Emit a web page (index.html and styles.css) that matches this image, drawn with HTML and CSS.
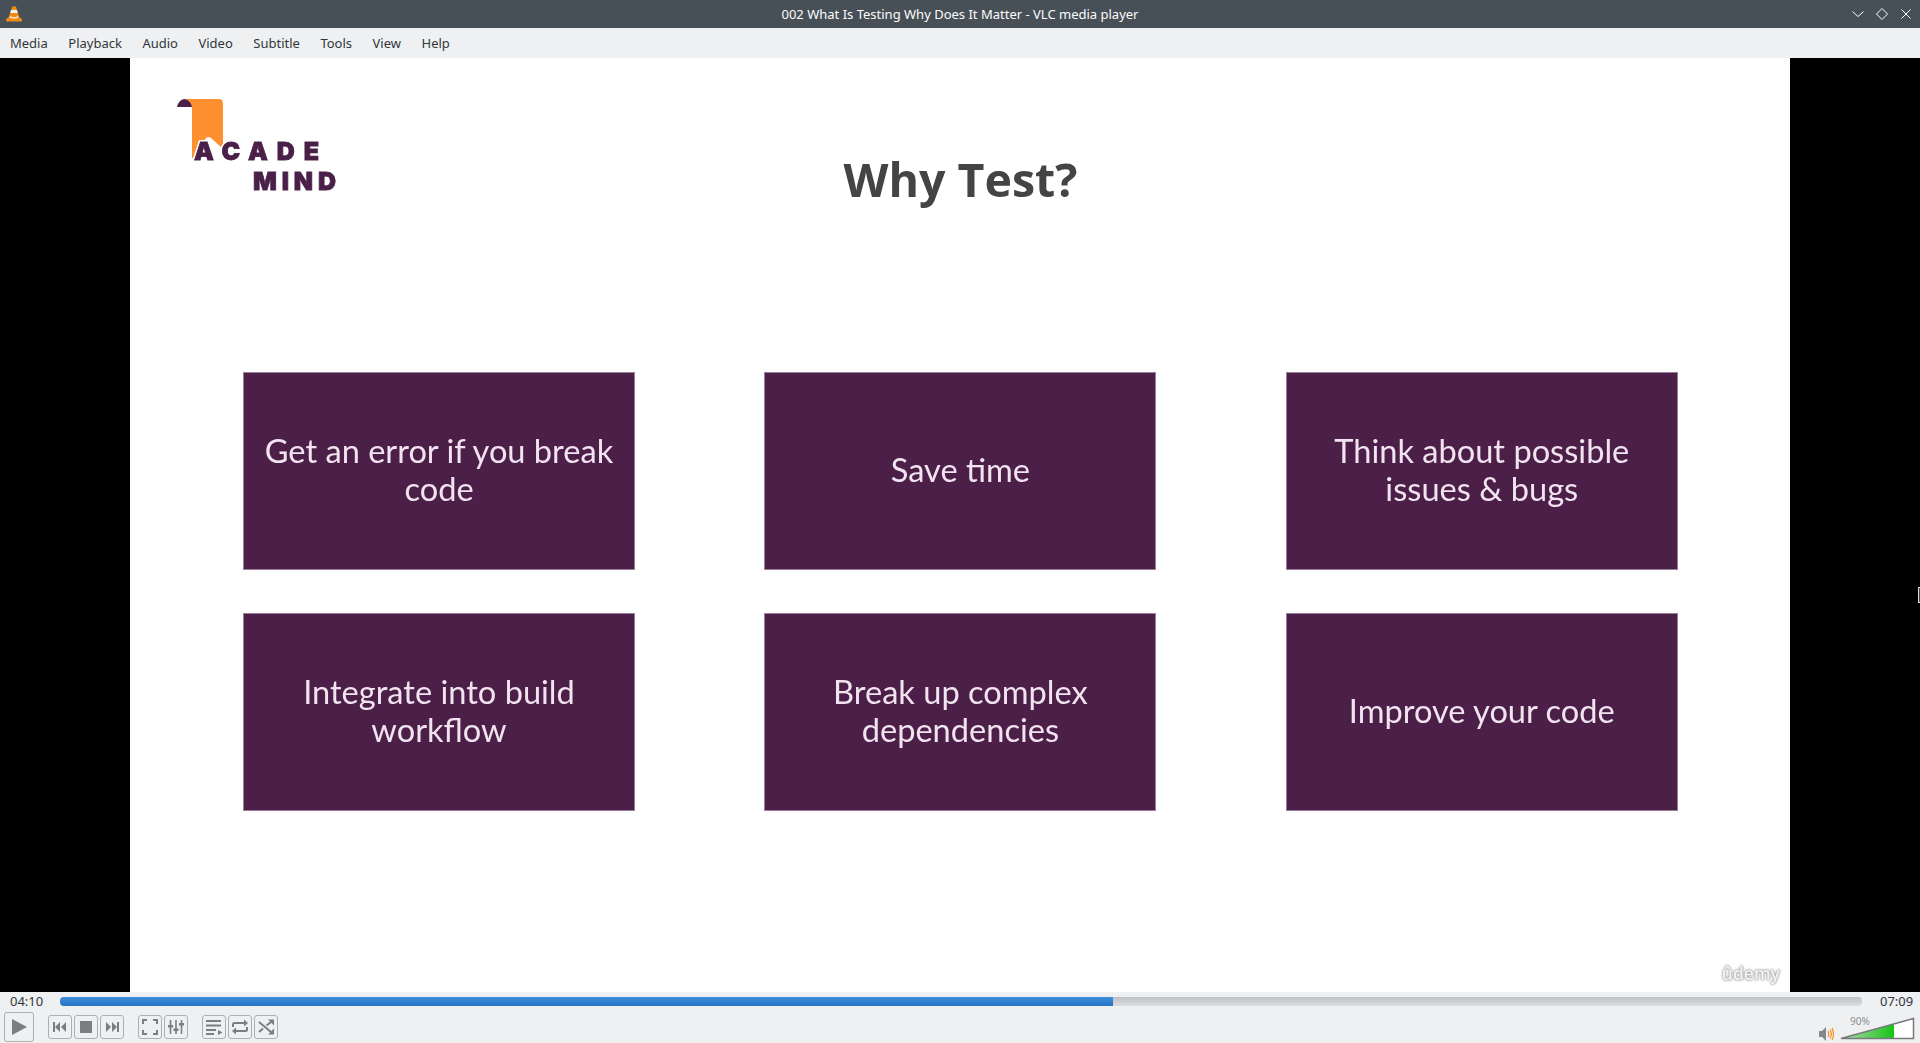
FILE: index.html
```html
<!DOCTYPE html>
<html lang="en">
<head>
<meta charset="utf-8">
<title>VLC media player</title>
<link rel="stylesheet" href="styles.css">
</head>
<body>
<div class="app">
  <header class="titlebar">
    <svg class="cone" width="18" height="18" viewBox="0 0 18 18">
      <path d="M7 1.500h4l1 3.500H6z" fill="#f28a12"/>
      <path d="M6 5h6l1 3H5z" fill="#f4f1ea"/>
      <path d="M5 8h8l1.400 4.500H3.600z" fill="#f28a12"/>
      <path d="M3.600 12h10.800l2.600 2.200v1.500q0 .8-1 .8H2q-1 0-1-.8v-1.500z" fill="#ee8a16"/>
      <path d="M5 11q4 2.400 8 0l.5 1.600q-4.500 2-9 0z" fill="#f7f2e8"/>
    </svg>
    <div class="wintitle">002 What Is Testing Why Does It Matter - VLC media player</div>
    <div class="winbtns">
      <svg width="14" height="14" viewBox="0 0 14 14"><path d="M1.500 4.500 7 9.500l5.500-5" fill="none" stroke="#fff" stroke-width="1"/></svg>
      <svg width="14" height="14" viewBox="0 0 14 14"><path d="M7 1.500 12.500 7 7 12.500 1.500 7z" fill="none" stroke="#fff" stroke-width="1"/></svg>
      <svg width="14" height="14" viewBox="0 0 14 14"><path d="M2.500 2.500l9 9M11.500 2.500l-9 9" fill="none" stroke="#fff" stroke-width="1"/></svg>
    </div>
  </header>

  <nav class="menubar">
    <span>Media</span><span>Playback</span><span>Audio</span><span>Video</span><span>Subtitle</span><span>Tools</span><span>View</span><span>Help</span>
  </nav>

  <main class="video">
    <section class="slide">
      <div class="slide-head">
        <svg class="logo" width="170" height="100" viewBox="0 0 170 100">
          <path d="M0 9Q2 1 8 1Q14 1 16 9Z" fill="#4a1f48"/>
          <path d="M8 1H42q4 0 4 5V51L34 40q-3-2-5 0L18 60H15V9Q14 3 8 1z" fill="#ff9030"/>
          <text x="17" y="62" class="logo-halo" textLength="125" lengthAdjust="spacing">ACADE</text>
          <text x="17" y="62" class="logo-text" textLength="125" lengthAdjust="spacing">ACADE</text>
          <text x="76" y="92" class="logo-text" textLength="83" lengthAdjust="spacing">MIND</text>
        </svg>
        <h1 class="heading">Why Test?</h1>
      </div>
      <div class="cards">
        <div class="card">Get an error if you break code</div>
        <div class="card">Save time</div>
        <div class="card">Think about possible issues &amp; bugs</div>
        <div class="card">Integrate into build workflow</div>
        <div class="card">Break up complex dependencies</div>
        <div class="card">Improve your code</div>
      </div>
      <div class="watermark">ûdemy</div>
    </section>
    <div class="cursor"></div>
  </main>

  <section class="seekrow">
    <span class="time">04:10</span>
    <div class="seek"><div class="seek-fill"></div></div>
    <span class="time">07:09</span>
  </section>

  <footer class="controls">
    <button class="btn play"><svg width="20" height="20" viewBox="0 0 20 20"><path d="M3 2l15 8-15 8z" fill="#7b7d80"/></svg></button>
    <div class="group first">
      <button class="btn"><svg width="16" height="16" viewBox="0 0 16 16"><path d="M1 3h2v10H1zM8 3v10L3 8zM14 3v10L9 8z" fill="#7b7d80"/></svg></button>
      <button class="btn"><svg width="16" height="16" viewBox="0 0 16 16"><path d="M2 2h12v12H2z" fill="#7b7d80"/></svg></button>
      <button class="btn"><svg width="16" height="16" viewBox="0 0 16 16"><path d="M15 3h-2v10h2zM8 3v10l5-5zM2 3v10l5-5z" fill="#7b7d80"/></svg></button>
    </div>
    <div class="group">
      <button class="btn"><svg width="18" height="18" viewBox="0 0 18 18"><path d="M2 6V2h4M12 2h4v4M16 12v4h-4M6 16H2v-4" fill="none" stroke="#7b7d80" stroke-width="2"/></svg></button>
      <button class="btn"><svg width="18" height="18" viewBox="0 0 18 18"><path d="M3.500 2v14M9 2v14M14.500 2v14" stroke="#7b7d80" stroke-width="1.600"/><path d="M1 7h5v2.500H1zM6.500 10.500h5V13h-5zM12 5h5v2.500h-5z" fill="#7b7d80"/></svg></button>
    </div>
    <div class="group">
      <button class="btn"><svg width="18" height="18" viewBox="0 0 18 18"><path d="M1 3h15M1 7.500h15M1 12h10M1 16h8" stroke="#7b7d80" stroke-width="1.800"/><path d="M13 12l4.500 2.500L13 17z" fill="#7b7d80"/></svg></button>
      <button class="btn"><svg width="18" height="18" viewBox="0 0 18 18"><path d="M2 9V6.500Q2 5 3.500 5H14M16 9v2.500q0 1.500-1.500 1.500H4" fill="none" stroke="#7b7d80" stroke-width="2"/><path d="M13 1.500l4 3.500-4 3.500zM5 9.500 1 13l4 3.500z" fill="#7b7d80"/></svg></button>
      <button class="btn"><svg width="18" height="18" viewBox="0 0 18 18"><path d="M2 4l12 10M2 14l4-3.500M9.500 7.500 14 4" fill="none" stroke="#7b7d80" stroke-width="2"/><path d="M11 1.500h6v6zM11 16.500h6v-6z" fill="#7b7d80"/></svg></button>
    </div>
    <div class="volume">
      <svg class="speaker" width="16" height="16" viewBox="0 0 16 16">
        <path d="M1 5h3l4-4v14l-4-4H1z" fill="#85878a"/>
        <path d="M10 5q1.500 3 0 6M12 3.500q2.500 4.500 0 9M14 2q3 6 0 12" fill="none" stroke="#f28c1e" stroke-width="1.200"/>
      </svg>
      <div class="vol-slider">
        <span class="vol-label">90%</span>
        <svg width="75" height="23" viewBox="0 0 75 23">
          <defs>
            <linearGradient id="vol" x1="0" x2="1" y1="0" y2="0">
              <stop offset="0" stop-color="#b7dcb5"/>
              <stop offset="1" stop-color="#15c415"/>
            </linearGradient>
          </defs>
          <path d="M1 21.500 73.500 1.500v20z" fill="#fff"/>
          <path d="M1 21.500 54 6.900v14.600z" fill="url(#vol)"/>
          <path d="M1 21.500 73.500 1.500v20z" fill="none" stroke="#77797c" stroke-width="1.500"/>
        </svg>
      </div>
    </div>
  </footer>
</div>
</body>
</html>
```
FILE: styles.css
```css
* { box-sizing: border-box; }
html, body { margin: 0; height: 100%; overflow: hidden; }
body { font-family: "Noto Sans", sans-serif; background: #eff0f1; }

.app { display: flex; flex-direction: column; height: 1043px; width: 1920px; }

.titlebar {
  position: relative;
  flex: 0 0 28px;
  display: flex;
  align-items: center;
  justify-content: space-between;
  padding: 0 7px 0 5px;
  background: #475057;
}
.cone { display: block; }
.wintitle {
  position: absolute;
  left: 0; right: 0;
  text-align: center;
  color: #fcfcfc;
  font-size: 13px;
  pointer-events: none;
}
.winbtns { display: flex; gap: 10px; align-items: center; }
.winbtns svg { display: block; }

.menubar {
  flex: 0 0 30px;
  display: flex;
  align-items: center;
  gap: 20.500px;
  padding: 0 0 0 10px;
  font-size: 13px;
  color: #31363b;
  background: #eff0f1;
}

.video {
  position: relative;
  flex: 0 0 934px;
  display: flex;
  justify-content: center;
  background: #000;
}
.slide {
  position: relative;
  width: 1660px;
  background: #fff;
  padding: 40px 112px 0 113px;
}
.slide-head {
  position: relative;
  height: 274px;
}
.logo {
  position: absolute;
  left: -66px;
  top: 0;
  filter: blur(.5px);
}
.logo-text, .logo-halo {
  font-family: "Inter", sans-serif;
  font-weight: 900;
  font-size: 25px;
}
.logo-text {
  fill: #4a1f48;
  stroke: #4a1f48;
  stroke-width: .8px;
}
.logo-halo {
  fill: #fff;
  stroke: #fff;
  stroke-width: 4px;
}
.heading {
  margin: 0;
  padding-top: 48px;
  text-align: center;
  font-family: "Open Sans", sans-serif;
  font-weight: 700;
  font-size: 46.500px;
  line-height: 66px;
  color: #444;
  filter: blur(.6px);
}
.cards {
  display: grid;
  grid-template-columns: repeat(3, 392px);
  grid-auto-rows: 198px;
  column-gap: 129.400px;
  row-gap: 43px;
  filter: blur(.35px);
}
.card {
  display: flex;
  align-items: center;
  justify-content: center;
  text-align: center;
  padding: 0 16px 2px;
  background: #4b1f47;
  border: 1px solid #9a7f9a;
  color: #f2e3f0;
  font-family: "Lato", sans-serif;
  font-size: 32.600px;
  line-height: 38px;
}
.watermark {
  position: absolute;
  right: 10px;
  bottom: 7px;
  font-family: "Open Sans", sans-serif;
  font-weight: 600;
  font-size: 17.500px;
  color: #f4f4f4;
  text-shadow: 0 0 2px #888, 0 0 3px #999;
  filter: blur(.6px);
}
.cursor {
  position: absolute;
  right: 0;
  top: 529px;
  width: 2px;
  height: 16px;
  border: 1px solid #ddd;
  border-right: 0;
  background: #444;
}

.seekrow {
  flex: 0 0 18px;
  display: flex;
  align-items: center;
  padding: 0 7px 0 10px;
  gap: 17px;
  background: #eff0f1;
}
.time { font-size: 13px; color: #31363b; width: 33px; }
.seek {
  flex: 1;
  height: 9px;
  margin-right: 1px;
  border-radius: 4px;
  background: linear-gradient(#bdbfc2, #dcdee0);
  overflow: hidden;
}
.seek-fill {
  width: 1053px;
  height: 100%;
  background: linear-gradient(#3d8edb, #2673c4);
}

.controls {
  flex: 1;
  display: flex;
  align-items: flex-start;
  padding: 2px 0 0 4px;
  background: #eff0f1;
}
.btn {
  display: flex;
  align-items: center;
  justify-content: center;
  width: 24px;
  height: 24px;
  margin: 0;
  padding: 0;
  border: 1px solid #adafb1;
  border-radius: 3px;
  background: #eff0f1;
}
.btn svg { display: block; }
.play { width: 30px; height: 30px; margin-right: 14px; }
.group { display: flex; gap: 2px; margin: 3px 14px 0 0; }
.volume {
  display: flex;
  align-items: flex-end;
  gap: 6px;
  margin-left: auto;
  padding-right: 5px;
  height: 30px;
}
.vol-slider { position: relative; height: 23px; width: 75px; margin-bottom: 2px; }
.vol-slider svg { display: block; }
.vol-label {
  position: absolute;
  left: 10px;
  top: -3px;
  font-size: 10px;
  color: #8d8f92;
}
```
